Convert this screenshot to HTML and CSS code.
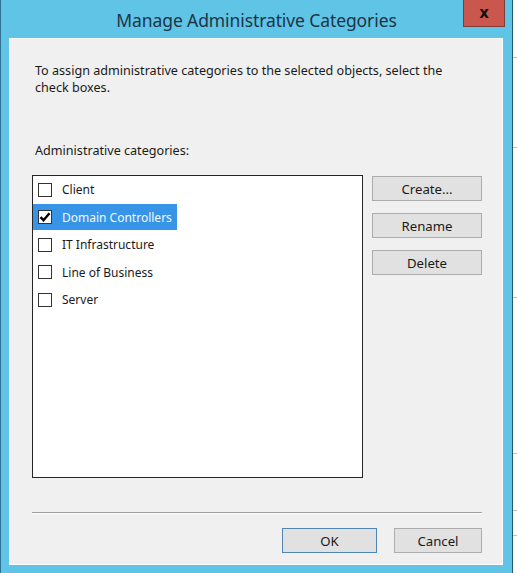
FILE: index.html
```html
<!DOCTYPE html>
<html>
<head>
<meta charset="utf-8">
<title>Manage Administrative Categories</title>
<link rel="stylesheet" href="styles.css">
</head>
<body>
<div class="desk">
  <div class="window">
    <div class="titlebar">
      <span class="title">Manage Administrative Categories</span>
      <button class="close">x</button>
    </div>
    <div class="client">
      <p class="intro">To assign administrative categories to the selected objects, select the<br>check boxes.</p>
      <p class="label">Administrative categories:</p>
      <div class="main">
        <ul class="list">
          <li class="item"><span class="entry"><span class="cb"></span>Client</span></li>
          <li class="item"><span class="entry selected"><span class="cb"><svg viewBox="0 0 14 14" width="14" height="14"><path d="M2.5 7.2 L5.5 10.2 L11.5 3.2" fill="none" stroke="#000" stroke-width="2.4"/></svg></span>Domain Controllers</span></li>
          <li class="item"><span class="entry"><span class="cb"></span>IT Infrastructure</span></li>
          <li class="item"><span class="entry"><span class="cb"></span>Line of Business</span></li>
          <li class="item"><span class="entry"><span class="cb"></span>Server</span></li>
        </ul>
        <div class="side">
          <button class="btn">Create...</button>
          <button class="btn">Rename</button>
          <button class="btn">Delete</button>
        </div>
      </div>
      <div class="spacer"></div>
      <div class="sep"></div>
      <div class="footer">
        <button class="btn ok">OK</button>
        <button class="btn cancel">Cancel</button>
      </div>
    </div>
  </div>
  <div class="behind"></div>
</div>
</body>
</html>
```
FILE: styles.css
```css
html, body {
  margin: 0;
  padding: 0;
  background: #ffffff;
}
body {
  font-family: "Noto Sans", "Open Sans", "DejaVu Sans", sans-serif;
  font-size: 12px;
  color: #1a1a1a;
}
.desk {
  display: flex;
  width: 517px;
  height: 573px;
  overflow: hidden;
}
.window {
  position: relative;
  width: 511px;
  height: 573px;
  flex: none;
  background: #5fc4e6;
  border-left: 1px solid #2f7293;
  border-right: 1px solid #25586f;
  display: flex;
  flex-direction: column;
}
.titlebar {
  height: 38px;
  flex: none;
  display: flex;
  align-items: center;
  justify-content: center;
}
.title {
  font-size: 17.5px;
  color: #1c3546;
  margin-top: 1px;
  letter-spacing: -0.1px;
}
.close {
  position: absolute;
  top: 0;
  right: 7px;
  width: 42px;
  height: 27px;
  margin: 0;
  padding: 0;
  background: #c9574d;
  border: 1px solid #7e3b36;
  border-top: none;
  color: #111;
  font-family: "DejaVu Sans", sans-serif;
  font-weight: bold;
  font-size: 15px;
  line-height: 22px;
}
.client {
  margin: 0 9px 8px 8px;
  flex: 1;
  background: #f0f0f0;
  border: 1px solid #fbfbfb;
  display: flex;
  flex-direction: column;
  padding: 0 20px 11px 22px;
}
.intro {
  margin: 23px 0 0 3px;
  line-height: 17px;
  font-size: 12.6px;
}
.label {
  margin: 46px 0 0 3px;
  line-height: 17px;
  font-size: 12.6px;
}
.main {
  margin-top: 16px;
  display: flex;
  gap: 9px;
}
.list {
  list-style: none;
  margin: 0;
  padding: 0;
  width: 329px;
  height: 301px;
  background: #ffffff;
  border: 1px solid #262626;
}
.item {
  height: 27.5px;
  display: flex;
  align-items: center;
}
.entry {
  display: inline-flex;
  align-items: center;
  height: 26px;
  padding: 0 5px 0 5px;
  gap: 10px;
}
.entry.selected {
  background: #3794e6;
  color: #f4f9ff;
}
.cb {
  width: 12px;
  height: 12px;
  background: #ffffff;
  border: 1px solid #333333;
  display: flex;
  align-items: center;
  justify-content: center;
}
.cb svg {
  display: block;
  flex: none;
}
.side {
  display: flex;
  flex-direction: column;
  gap: 12px;
  padding-top: 1px;
}
.btn {
  width: 110px;
  height: 25px;
  margin: 0;
  padding: 0;
  background: #e1e1e1;
  border: 1px solid #adadad;
  font-family: inherit;
  font-size: 13.2px;
  color: #1a1a1a;
}
.spacer {
  flex: 1;
}
.sep {
  height: 1px;
  background: #a0a0a0;
  border-bottom: 1px solid #fdfdfd;
}
.footer {
  margin-top: 14px;
  display: flex;
  justify-content: flex-end;
  gap: 17px;
}
.btn.ok {
  width: 95px;
  border-color: #4f86b3;
}
.btn.cancel {
  width: 88px;
}
.behind {
  flex: 1;
  background:
    linear-gradient(#bdbdbd, #bdbdbd) 0 57px / 100% 1px no-repeat,
    linear-gradient(#bdbdbd, #bdbdbd) 0 147px / 100% 1px no-repeat,
    linear-gradient(#bdbdbd, #bdbdbd) 0 297px / 100% 1px no-repeat,
    linear-gradient(#bdbdbd, #bdbdbd) 0 453px / 100% 1px no-repeat,
    linear-gradient(#bdbdbd, #bdbdbd) 0 510px / 100% 1px no-repeat,
    linear-gradient(#bdbdbd, #bdbdbd) 0 535px / 100% 1px no-repeat,
    #ffffff;
}
```
